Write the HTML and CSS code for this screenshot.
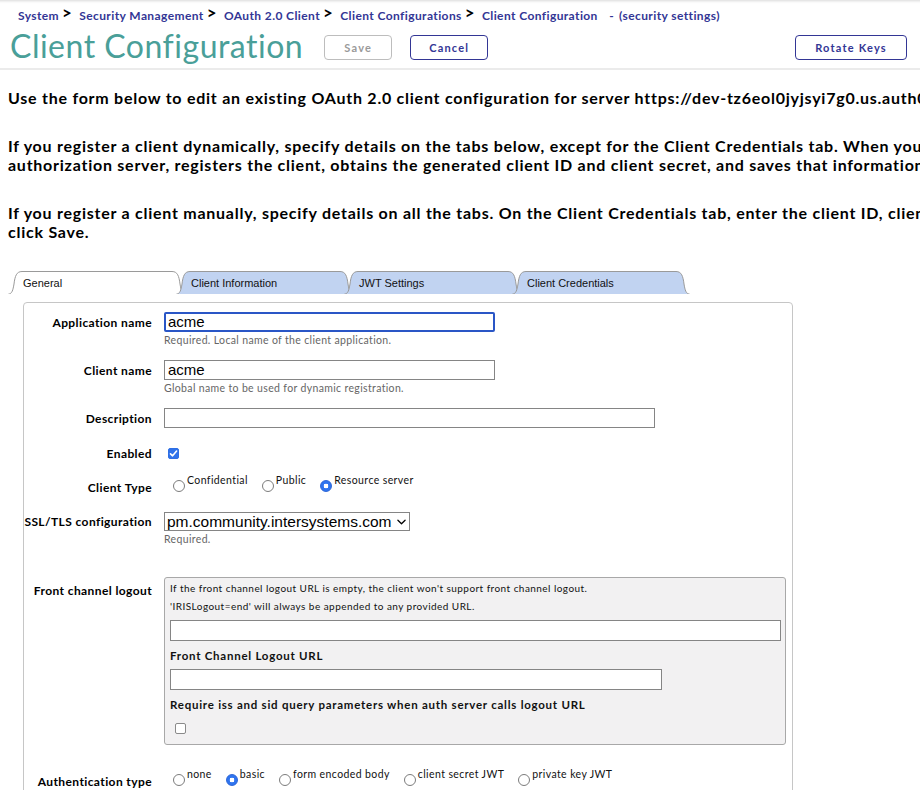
FILE: index.html
```html
<!DOCTYPE html>
<html>
<head>
<meta charset="utf-8">
<title>Client Configuration</title>
<link rel="stylesheet" href="styles.css">
</head>
<body>
<header class="header">
  <nav class="crumbs">
    <span class="crumb">System</span><span class="sep">&gt;</span>
    <span class="crumb">Security Management</span><span class="sep">&gt;</span>
    <span class="crumb">OAuth 2.0 Client</span><span class="sep">&gt;</span>
    <span class="crumb">Client Configurations</span><span class="sep">&gt;</span>
    <span class="crumb">Client Configuration</span>
    <span class="dash">-</span><span class="crumb">(security settings)</span>
  </nav>
  <div class="titlebar">
    <h1 class="title">Client Configuration</h1>
    <button class="btn btn-disabled">Save</button>
    <button class="btn btn-cancel">Cancel</button>
    <button class="btn btn-rotate">Rotate Keys</button>
  </div>
</header>

<main class="intro">
  <p class="para"><span class="line">Use the form below to edit an existing OAuth 2.0 client configuration for server https://dev-tz6eol0jyjsyi7g0.us.auth0.com/</span></p>
  <p class="para"><span class="line">If you register a client dynamically, specify details on the tabs below, except for the Client Credentials tab. When you click Save, the system contacts the</span><span class="line">authorization server, registers the client, obtains the generated client ID and client secret, and saves that information.</span></p>
  <p class="para"><span class="line">If you register a client manually, specify details on all the tabs. On the Client Credentials tab, enter the client ID, client secret, and other details, and then</span><span class="line">click Save.</span></p>
</main>

<div class="tabs">
  <div class="tab tab-active">
    <svg class="tab-shape" width="178" height="24" viewBox="0 0 178 24"><path d="M0.5,24 C4,24 5,20 6,14 C7,6 8.5,1.5 14,1.5 L164,1.5 C169.5,1.5 171,6 172,14 C173,20 174,24 177.5,24" fill="#ffffff" stroke="#9a9a9a" stroke-width="1"/></svg>
    <span class="tab-label">General</span>
  </div>
  <div class="tab">
    <svg class="tab-shape" width="178" height="24" viewBox="0 0 178 24"><path d="M0.5,24 C4,24 5,20 6,14 C7,6 8.5,1.5 14,1.5 L164,1.5 C169.5,1.5 171,6 172,14 C173,20 174,24 177.5,24" fill="#c1d3f1" stroke="#9a9a9a" stroke-width="1"/></svg>
    <span class="tab-label">Client Information</span>
  </div>
  <div class="tab">
    <svg class="tab-shape" width="178" height="24" viewBox="0 0 178 24"><path d="M0.5,24 C4,24 5,20 6,14 C7,6 8.5,1.5 14,1.5 L164,1.5 C169.5,1.5 171,6 172,14 C173,20 174,24 177.5,24" fill="#c1d3f1" stroke="#9a9a9a" stroke-width="1"/></svg>
    <span class="tab-label">JWT Settings</span>
  </div>
  <div class="tab">
    <svg class="tab-shape" width="178" height="24" viewBox="0 0 178 24"><path d="M0.5,24 C4,24 5,20 6,14 C7,6 8.5,1.5 14,1.5 L164,1.5 C169.5,1.5 171,6 172,14 C173,20 174,24 177.5,24" fill="#c1d3f1" stroke="#9a9a9a" stroke-width="1"/></svg>
    <span class="tab-label">Client Credentials</span>
  </div>
</div>

<section class="formbox">
  <div class="row row-app">
    <label class="lbl lbl-input">Application name</label>
    <div class="field">
      <input class="text text-focus w-mid" type="text" value="acme">
      <div class="help">Required. Local name of the client application.</div>
    </div>
  </div>
  <div class="row row-gap13">
    <label class="lbl lbl-input">Client name</label>
    <div class="field">
      <input class="text w-mid" type="text" value="acme">
      <div class="help">Global name to be used for dynamic registration.</div>
    </div>
  </div>
  <div class="row row-gap13">
    <label class="lbl lbl-input">Description</label>
    <div class="field">
      <input class="text w-wide" type="text" value="">
    </div>
  </div>
  <div class="row row-enabled">
    <label class="lbl lbl-check">Enabled</label>
    <div class="field field-check">
      <input class="check checked" type="checkbox" checked>
    </div>
  </div>
  <div class="row row-type">
    <label class="lbl lbl-radio">Client Type</label>
    <div class="field options">
      <label class="opt"><input class="radio" type="radio" name="ct"><span>Confidential</span></label>
      <label class="opt"><input class="radio" type="radio" name="ct"><span>Public</span></label>
      <label class="opt"><input class="radio" type="radio" name="ct" checked><span>Resource server</span></label>
    </div>
  </div>
  <div class="row row-ssl">
    <label class="lbl lbl-select">SSL/TLS configuration</label>
    <div class="field">
      <select class="select"><option>pm.community.intersystems.com</option></select>
      <div class="help">Required.</div>
    </div>
  </div>
  <div class="row row-front">
    <label class="lbl lbl-front">Front channel logout</label>
    <div class="field">
      <div class="graybox">
        <div class="gtext">If the front channel logout URL is empty, the client won't support front channel logout.</div>
        <div class="gtext">'IRISLogout=end' will always be appended to any provided URL.</div>
        <input class="text gin-full" type="text" value="">
        <div class="gbold">Front Channel Logout URL</div>
        <input class="text gin-mid" type="text" value="">
        <div class="gbold">Require iss and sid query parameters when auth server calls logout URL</div>
        <input class="check gcheck" type="checkbox">
      </div>
    </div>
  </div>
  <div class="row row-auth">
    <label class="lbl lbl-radio">Authentication type</label>
    <div class="field options">
      <label class="opt"><input class="radio" type="radio" name="at"><span>none</span></label>
      <label class="opt"><input class="radio" type="radio" name="at" checked><span>basic</span></label>
      <label class="opt"><input class="radio" type="radio" name="at"><span>form encoded body</span></label>
      <label class="opt"><input class="radio" type="radio" name="at"><span>client secret JWT</span></label>
      <label class="opt"><input class="radio" type="radio" name="at"><span>private key JWT</span></label>
    </div>
  </div>
</section>
</body>
</html>
```

FILE: styles.css
```css
html, body {
  margin: 0;
  padding: 0;
  overflow: hidden;
  background: #ffffff;
}
body {
  font-family: Lato, "DejaVu Sans", sans-serif;
  color: #000;
  width: 920px;
  height: 790px;
}

/* Header */
.header {
  height: 68px;
  border-bottom: 2px solid #ebebeb;
  box-shadow: inset 0 4px 3px -3px #d8d8d8;
}
.crumbs {
  height: 30px;
  line-height: 27px;
  padding-left: 18px;
  white-space: nowrap;
  font-size: 12px;
  font-weight: 700;
  color: #333695;
  letter-spacing: 0.4px;
}
.crumb { color: #333695; }
.sep {
  display: inline-block;
  color: #000;
  font-size: 17px;
  font-weight: 700;
  margin: 0 4px 0 3px;
  position: relative;
  top: -1px;
  letter-spacing: 0;
}
.dash {
  color: #333695;
  margin: 0 5px 0 8px;
}
.titlebar {
  display: flex;
  align-items: flex-start;
  height: 38px;
  padding: 0 13px 0 10px;
}
.title {
  margin: -2px 0 0 0;
  font-size: 32px;
  line-height: 36px;
  font-weight: 400;
  color: #4a9f99;
  letter-spacing: 0.5px;
  white-space: nowrap;
}
.btn {
  margin-top: 5px;
  height: 25px;
  box-sizing: border-box;
  background: #fff;
  border-radius: 4px;
  font-family: Lato, sans-serif;
  font-size: 11px;
  font-weight: 700;
  letter-spacing: 1.2px;
  padding: 0;
  cursor: pointer;
}
.btn-disabled {
  margin-left: 21px;
  width: 68px;
  border: 1px solid #bdbdbd;
  color: #9a9a9a;
}
.btn-cancel {
  margin-left: 18px;
  width: 78px;
  border: 1px solid #333695;
  color: #333695;
}
.btn-rotate {
  margin-left: auto;
  width: 112px;
  border: 1px solid #333695;
  color: #333695;
}

/* Intro paragraphs */
.intro {
  padding: 18px 0 0 8px;
}
.para {
  margin: 0 0 28px 0;
  font-size: 16px;
  line-height: 19.5px;
  font-weight: 700;
  letter-spacing: 0.75px;
}
.line {
  display: block;
  white-space: nowrap;
}

/* Tabs */
.tabs {
  display: flex;
  padding-left: 8px;
  height: 24px;
}
.tab {
  display: grid;
  width: 178px;
  height: 24px;
  flex: none;
}
.tab + .tab { margin-left: -10px; }
.tab-shape {
  grid-area: 1 / 1;
  display: block;
}
.tab-label {
  grid-area: 1 / 1;
  font-family: "Liberation Sans", Arial, sans-serif;
  font-size: 11px;
  line-height: 24px;
  padding: 1px 0 0 15px;
  color: #111;
}

/* Form box */
.formbox {
  margin: 8px 0 0 23px;
  width: 770px;
  box-sizing: border-box;
  border: 1px solid #c6c6c6;
  border-radius: 4px;
  height: 520px;
}
.row {
  display: grid;
  grid-template-columns: 128px 1fr;
  column-gap: 12px;
  align-items: start;
}
.row-app { margin-top: 9px; }
.row-gap13 { margin-top: 13px; }
.row-enabled { margin-top: 16px; }
.row-type { margin-top: 10px; }
.row-ssl { margin-top: 15px; }
.row-front { margin-top: 31px; }
.row-auth { margin-top: 22px; }

.lbl {
  text-align: right;
  font-size: 12px;
  font-weight: 700;
  white-space: nowrap;
  letter-spacing: 0.4px;
}
.lbl-input { line-height: 21px; }
.lbl-check { line-height: 18px; }
.lbl-radio { line-height: 18px; padding-top: 6px; }
.lbl-select { line-height: 19px; }
.lbl-front { line-height: 18px; padding-top: 5px; }

.text {
  display: block;
  box-sizing: border-box;
  height: 20px;
  margin: 0;
  padding: 0 3px;
  border: 1px solid #858585;
  border-radius: 0;
  font-family: "Liberation Sans", Arial, sans-serif;
  font-size: 15px;
  color: #000;
  background: #fff;
  outline: none;
}
.text-focus {
  border: 2px solid #2a56c6;
  border-radius: 2px;
  padding: 0 2px;
}
.w-mid { width: 331px; }
.w-wide { width: 491px; }

.help {
  margin-top: 1px;
  font-size: 10.5px;
  line-height: 14px;
  color: #666;
  letter-spacing: 0.35px;
}

.field-check { height: 18px; display: flex; align-items: center; }
.check {
  appearance: none;
  -webkit-appearance: none;
  width: 11px;
  height: 11px;
  margin: 0 0 0 4px;
  box-sizing: border-box;
  border: 1px solid #8a8a8a;
  border-radius: 2px;
  background: #fff;
}
.check.checked,
.check:checked {
  border-color: #2f6fe4;
  background-color: #2f72ea;
  background-image: url("data:image/svg+xml,%3Csvg xmlns='http://www.w3.org/2000/svg' viewBox='0 0 11 11'%3E%3Cpath d='M2.5 5.8 L4.6 7.8 L8.6 3' fill='none' stroke='white' stroke-width='1.6' stroke-linecap='round' stroke-linejoin='round'/%3E%3C/svg%3E");
  background-size: 11px 11px;
  background-position: -1px -1px;
}

.options {
  display: flex;
  padding-left: 9px;
}
.opt {
  display: flex;
  align-items: flex-start;
  margin-right: 14px;
  font-size: 10.5px;
  line-height: 14px;
  color: #111;
  white-space: nowrap;
  letter-spacing: 0.4px;
}
.radio {
  appearance: none;
  -webkit-appearance: none;
  width: 12px;
  height: 12px;
  margin: 7px 2px 0 0;
  box-sizing: border-box;
  border: 1px solid #7c7c7c;
  border-radius: 50%;
  background: #fff;
  flex: none;
}
.radio:checked {
  border-color: #2c66d8;
  background: radial-gradient(circle, #ffffff 0 2.2px, #2f74ef 2.6px);
}

.select {
  appearance: none;
  -webkit-appearance: none;
  display: block;
  box-sizing: border-box;
  width: 246px;
  height: 19px;
  margin: 0;
  padding: 0 16px 0 2px;
  border: 1px solid #858585;
  border-radius: 0;
  font-family: "Liberation Sans", Arial, sans-serif;
  font-size: 15.5px;
  line-height: 17px;
  color: #000;
  background-color: #fff;
  background-image: url("data:image/svg+xml,%3Csvg xmlns='http://www.w3.org/2000/svg' viewBox='0 0 10 6'%3E%3Cpath d='M1 1 L5 5 L9 1' fill='none' stroke='black' stroke-width='1.4' stroke-linecap='round' stroke-linejoin='round'/%3E%3C/svg%3E");
  background-repeat: no-repeat;
  background-size: 9px 6px;
  background-position: 232px 6px;
}

.graybox {
  width: 622px;
  box-sizing: border-box;
  height: 168px;
  background: #f2f1f2;
  border: 1px solid #a8a8a8;
  border-radius: 3px;
  padding: 1px 5px 0 5px;
}
.gtext {
  font-size: 10px;
  line-height: 18px;
  color: #111;
  white-space: nowrap;
  letter-spacing: 0.45px;
}
.gin-full { width: 611px; height: 21px; margin-top: 5px; }
.gin-mid { width: 492px; height: 21px; margin-top: 4px; }
.gbold {
  margin-top: 6px;
  font-size: 11.5px;
  line-height: 18px;
  font-weight: 700;
  color: #111;
  white-space: nowrap;
  letter-spacing: 0.75px;
}
.gcheck {
  display: block;
  margin: 9px 0 0 5px;
}
```
